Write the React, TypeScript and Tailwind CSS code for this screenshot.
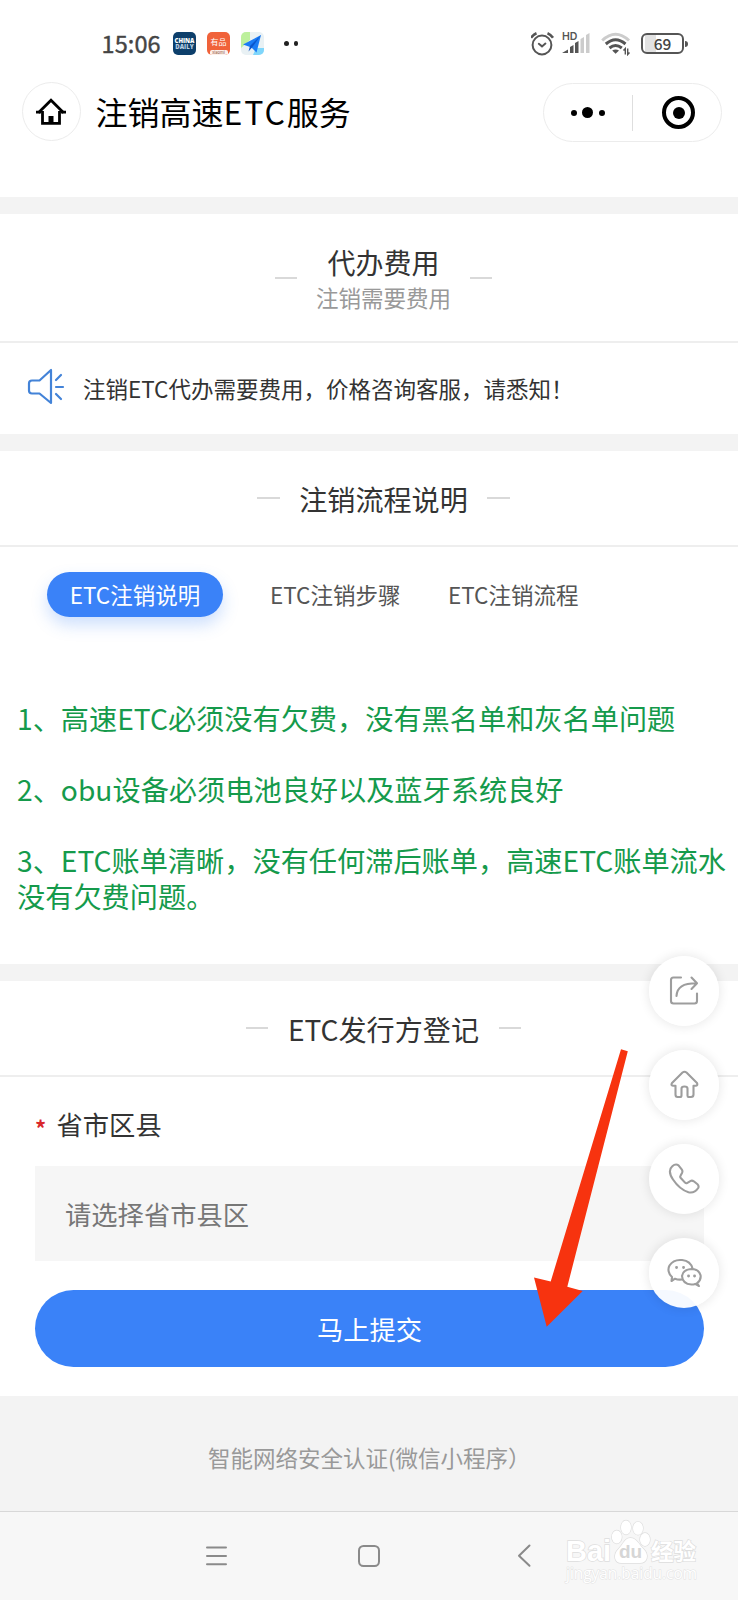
import type { ReactNode } from 'react';

const tabs = ['ETC注销说明', 'ETC注销步骤', 'ETC注销流程'];

function StatusBar() {
  return (
    <div className="flex h-[75px] items-center pl-[101.5px] pr-[50.5px] pt-[12px]">
      <span className="w-[71.5px] pt-[1px] text-[23.5px] leading-none tracking-[0.1px] text-[#444] [-webkit-text-stroke:0.4px_#444]">15:06</span>
      <div className="flex h-[23px] w-[23px] flex-col items-center justify-center rounded-[5px] bg-[#0d3f6b] font-['Open_Sans'] text-[6px] font-extrabold leading-[6px] text-white">
        <span>CHINA</span>
        <span className="text-[#b9cde0]">DAILY</span>
      </div>
      <div className="ml-[11px] flex h-[23px] w-[23px] flex-col items-center overflow-hidden rounded-[5px] bg-[#f0623a] text-white">
        <span className="h-[18px] text-[8px] leading-[19px]">有品</span>
        <span className="h-[5px] w-[18px] overflow-hidden rounded-t-[2px] bg-[#fdf1ec] text-center text-[4px] leading-[5px] text-[#8a4a35]">xiaomi</span>
      </div>
      <svg className="ml-[11px]" width="23" height="23" viewBox="0 0 23 23">
        <clipPath id="map">
          <rect width="23" height="23" rx="5" />
        </clipPath>
        <g clipPath="url(#map)">
          <rect width="23" height="23" fill="#e9f1f4" />
          <path d="M0 0h9v8L0 16z" fill="#bdf09c" />
          <path d="M12 23l3-7h8v7z" fill="#7fd6fb" />
          <path d="M2 12.500L20 3l-4.500 17.500-5-5z" fill="#1a7cf5" />
          <path d="M20 3L9 14l-1.500 5.500 3.500-4z" fill="#0a55cc" />
        </g>
      </svg>
      <div className="ml-[20px] flex gap-[5px]">
        <i className="h-[4.500px] w-[4.500px] rounded-full bg-[#222]" />
        <i className="h-[4.500px] w-[4.500px] rounded-full bg-[#222]" />
      </div>
      <svg className="ml-auto" width="24" height="24" viewBox="0 0 24 24" fill="none" stroke="#555" strokeWidth="2" strokeLinecap="round">
        <circle cx="11" cy="13" r="9.400" />
        <path d="M7.800 11.800l3.200 2.600 3.400-2.800" />
        <path d="M0 5.700Q2.500 2.400 5.500 1.200M22 5.700Q19.500 2.400 16.500 1.200" strokeLinecap="butt" strokeWidth="2.600" />
      </svg>
      <div className="relative ml-[8px] h-[23px] w-[29px]">
        <span className="absolute left-[-1px] top-0 font-['Inter'] text-[10.500px] font-semibold leading-[9px] text-[#555]">HD</span>
        <svg className="absolute left-[-1px] top-0" width="29" height="23" viewBox="0 0 29 23">
          <path d="M0 21L6 17.500V21zM8 21v-6l3.500-2v8zM13 21V11l3.500-2v12z" fill="#555" />
          <path d="M18.500 21V7l3.500-2v16zM24 21V3l3.500-2v20z" fill="#ccc" />
        </svg>
      </div>
      <svg className="ml-[9px] mr-px" width="30" height="24" viewBox="0 0 30 24" fill="none">
        <path d="M1.200 8.500Q14.500-4 28 8.500" stroke="#ccc" strokeWidth="3" />
        <path d="M4.800 12Q14.500 3.500 24.500 12" stroke="#555" strokeWidth="3" />
        <path d="M8.500 16Q14.500 11 20.800 16" stroke="#555" strokeWidth="3" />
        <path d="M11.200 18.400q3.400-1.800 6.800 0l-3.400 3.400z" fill="#555" />
        <path d="M24.300 22.500V16.500l-1.800 2M26.700 16.500v6l1.800-2" stroke="#555" strokeWidth="1.400" />
      </svg>
      <div className="ml-[9px] flex h-[21px] w-[43px] items-center justify-center rounded-[6px] border-[2.500px] border-[#555] bg-[linear-gradient(90deg,#fff_2px,#e2e2e2_2px,#e2e2e2_13px,#fff_13px)] text-[15.500px] font-medium leading-none text-[#444]">
        69
      </div>
      <i className="ml-[1px] h-[6px] w-[2.500px] rounded-r bg-[#555]" />
    </div>
  );
}

function NavBar() {
  return (
    <div className="flex h-[122px] items-start pl-[21.500px] pr-[16.500px] pt-[7px]">
      <div className="flex h-[59px] w-[59px] items-center justify-center rounded-full border border-[#ececec]">
        <svg width="32" height="30" viewBox="0 0 32 30">
          <path d="M3.400 15.700L16 3.300l12.600 12.400M7.500 14v12.400h17V14" fill="none" stroke="#000" strokeWidth="2.800" />
          <path d="M1 15.100h5M26 15.100h5" stroke="#000" strokeWidth="2.600" />
          <rect x="13.500" y="19" width="5" height="7" />
        </svg>
      </div>
      <h1 className="ml-[15px] text-[32px] leading-[58px] text-black">
        注销高速<span className="tracking-[1.900px]">ETC</span>服务
      </h1>
      <div className="ml-auto mt-[1px] flex h-[59px] w-[179px] items-center rounded-full border border-[#ececec]">
        <div className="flex w-[88px] items-center justify-center gap-[5.500px]">
          <i className="h-[6px] w-[6px] rounded-full bg-black" />
          <i className="h-[11px] w-[11px] rounded-full bg-black" />
          <i className="h-[6px] w-[6px] rounded-full bg-black" />
        </div>
        <i className="h-[36px] w-px bg-[#dedede]" />
        <div className="ml-[29.500px] flex h-[33px] w-[33px] items-center justify-center rounded-full border-[4.500px] border-black">
          <i className="h-[12px] w-[12px] rounded-full bg-black" />
        </div>
      </div>
    </div>
  );
}

function Dash() {
  return <i className="h-[2px] w-[22.500px] bg-[#d9d9d9]" />;
}

function Heading({ children }: { children: ReactNode }) {
  return (
    <div className="flex h-[96px] items-center justify-center gap-[19.500px] border-b-2 border-[#eee] pl-[29px]">
      <Dash />
      <h2 className="pt-[2px] text-[28.100px] leading-[40px] text-[#333]">{children}</h2>
      <Dash />
    </div>
  );
}

function FloatButton({ children }: { children: ReactNode }) {
  return (
    <button className="flex h-[70px] w-[70px] items-center justify-center rounded-full bg-white/95 shadow-[0_0_12px_rgba(0,0,0,0.11)]">
      <svg width="36" height="36" viewBox="0 0 36 36" fill="none" stroke="#9d9d9d" strokeWidth="2.100" strokeLinecap="round" strokeLinejoin="round">
        {children}
      </svg>
    </button>
  );
}

function Watermark() {
  return (
    <div className="absolute left-[566px] top-[1519px] flex w-[136px] flex-col text-white [-webkit-text-stroke:1.400px_#dedede] [paint-order:stroke_fill]">
      <div className="flex h-[45px] items-end">
        <span className="w-[45px] font-['Liberation_Sans'] text-[29px] font-bold leading-[26px]">Bai</span>
        <div className="relative h-[45px] w-[40px]">
          <svg width="40" height="46" viewBox="0 0 40 46" fill="#fff" stroke="#dedede" strokeWidth="1.300">
            <ellipse cx="5.800" cy="18" rx="5" ry="6.500" />
            <ellipse cx="15" cy="8.500" rx="5" ry="7" />
            <ellipse cx="27" cy="9.300" rx="5" ry="6.500" />
            <ellipse cx="34" cy="20.500" rx="5" ry="6.500" />
            <path d="M19.500 19c-6 0-7 6-12 11-6 6-4 14 3 14h18c8 0 10-8 4-14-5-5-7-11-13-11z" />
          </svg>
          <span className="absolute left-[8px] top-[20px] font-['Liberation_Sans'] text-[19px] font-bold leading-[26px] text-[#d6d6d6] [-webkit-text-stroke:0px]">du</span>
        </div>
        <span className="text-[22.500px] font-bold leading-[28px]">经验</span>
      </div>
      <span className="font-['Open_Sans'] text-[15.400px] leading-[19px] [-webkit-text-stroke:1px_#e2e2e2]">jingyan.baidu.com</span>
    </div>
  );
}

export default function App() {
  return (
    <div className="relative flex h-[1600px] w-[738px] flex-col overflow-hidden bg-white font-['Noto_Sans_CJK_SC',sans-serif]">
      <StatusBar />
      <NavBar />

      <div className="h-[17px] bg-[#f3f3f3]" />
      <div className="flex h-[129px] items-center justify-center gap-[18.500px] border-b-2 border-[#eee] pl-[29px]">
        <Dash />
        <div className="pt-[2px] text-center">
          <h2 className="text-[28px] leading-[36px] text-[#333]">代办费用</h2>
          <p className="text-[22.500px] leading-[34px] text-[#999]">注销需要费用</p>
        </div>
        <Dash />
      </div>
      <div className="flex h-[91px] items-center pl-[27px]">
        <svg className="mb-[4px]" width="38" height="38" viewBox="0 0 38 38" fill="none" stroke="#4383d8" strokeWidth="2.200" strokeLinejoin="round" strokeLinecap="round">
          <path d="M24 2v33L12.500 25.500H5Q2 25.500 2 22.500V15.500Q2 12.500 5 12.500h7.500z" />
          <path d="M29 12l5-5M29 19h7M29 26l5 5" />
        </svg>
        <p className="ml-[18px] pt-[1px] text-[22.500px] text-[#333]">注销ETC代办需要费用，价格咨询客服，请悉知！</p>
      </div>

      <div className="h-[17px] bg-[#f3f3f3]" />
      <Heading>注销流程说明</Heading>
      <div className="flex h-[143px] items-start pl-[47px] pt-[25px] text-[22.500px] leading-[45px] text-[#555]">
        {tabs.map((tab, i) => (
          <span
            key={tab}
            className={
              i === 0
                ? 'mr-[24px] w-[176px] rounded-full bg-[#3a82f8] text-center text-white shadow-[0_8px_16px_rgba(58,130,248,0.25)]'
                : 'w-[178px] pl-[23px]'
            }
          >
            {tab}
          </span>
        ))}
      </div>
      <div className="h-[274px] pl-[17px] pt-[10px] text-[28.200px] leading-[35.500px] text-[#159a4b]">
        <p className="mb-[35.500px]">1、高速ETC必须没有欠费，没有黑名单和灰名单问题</p>
        <p className="mb-[35.500px]">2、obu设备必须电池良好以及蓝牙系统良好</p>
        <p className="-mr-4">3、ETC账单清晰，没有任何滞后账单，高速ETC账单流水没有欠费问题。</p>
      </div>

      <div className="h-[17px] bg-[#f3f3f3]" />
      <Heading>ETC发行方登记</Heading>
      <div className="flex h-[89px] items-center pl-[35px] pt-[4px] text-[26.300px] text-[#333]">
        <span className="w-[21.500px] pt-[6px] text-[22px] font-bold leading-[30px] text-[#d9272b]">*</span>
        省市区县
      </div>
      <div className="ml-[35px] mr-[34px] flex h-[95px] items-center bg-[#f6f6f6] pl-[30px] text-[26.300px] text-[#777]">请选择省市县区</div>
      <button className="ml-[35px] mr-[34px] mt-[29px] h-[77px] shrink-0 rounded-full bg-[#3a82f8] text-[26.300px] text-white">马上提交</button>

      <div className="mt-[29px] h-[115px] bg-[#f3f3f3] pl-[208px] pt-[44px] text-[22.500px] leading-[34px] text-[#999]">
        智能网络安全认证(微信小程序）
      </div>
      <div className="flex h-[89px] items-center border-t border-[#d8d8d8] bg-[#f7f7f7] text-[#8a8a8a]">
        <svg className="ml-[206px]" width="22" height="22" viewBox="0 0 22 22" stroke="currentColor" strokeWidth="2" strokeLinecap="round">
          <path d="M1 2.500h19M1 11h19M1 19.300h19" />
        </svg>
        <svg className="ml-[129px]" width="24" height="24" viewBox="0 0 24 24" fill="none" stroke="currentColor" strokeWidth="2">
          <rect x="2" y="2" width="20" height="20" rx="4.500" />
        </svg>
        <svg className="ml-[136px]" width="16" height="24" viewBox="0 0 16 24" fill="none" stroke="currentColor" strokeWidth="2" strokeLinecap="round" strokeLinejoin="round">
          <path d="M12.500 1.500L2 11.800l10.500 10" />
        </svg>
      </div>

      <div className="absolute left-[649px] top-[956px] flex flex-col gap-[24px]">
        <FloatButton>
          <path d="M15 4.500H7.500Q5 4.500 5 7v21Q5 30.500 7.500 30.500h21Q31 30.500 31 28V20.500" />
          <path d="M10.500 23C11 14 17 10.300 30.500 10.300M25.500 4.500l5.500 5.800-5.500 5.700" />
        </FloatButton>
        <FloatButton>
          <path d="M16.500 5.500Q18.500 4 20.500 5.500L31 16Q32 18.500 30 18.800h-2.500V27.500Q27.500 30 25 30H22.500Q21.500 30 21.500 28.500v-7Q21.500 19.500 18.500 19.500T15.500 21.500v7Q15.500 30 14 30H11.500Q9.500 30 9.500 27.500V18.800H7Q4.500 18.500 6 16z" />
        </FloatButton>
        <FloatButton>
          <path d="M12.500 4.300Q9.500 2.300 6.300 5.300C2.300 8.800 4 14 7 18.500c4 6 9.500 10.800 15.500 12.800 4.500 1 7.500-1 9.700-4.300q1-2-.7-3.700l-3.700-3q-1.800-1.200-3.500-.2l-3.300 2q-1 .5-2-.5l-4.200-4.600q-1-1.200-.3-2.200l1.500-2.800q1-2-.3-3.700z" />
        </FloatButton>
        <FloatButton>
          <path d="M16 24.500q-4 .5-7-.8L5.500 26l.5-4C2.500 19 1.500 14 3.500 10.500 9 2 24 3.500 26.500 13.500" />
          <path d="M31 28.300Q35.500 24.500 34.500 20 32.500 14 25.500 14 17 14.500 16 21 16.500 29 25.500 29.500q2 0 3.700-.6L33 31z" />
          <path d="M10.500 12.500h.1M17.500 12.500h.1M22.500 21h.1M28.500 21h.1" strokeWidth="2.800" />
        </FloatButton>
      </div>

      <svg className="absolute left-[530px] top-[1045px]" width="102" height="286" viewBox="530 1045 102 286">
        <path d="M621 1049.300L627.800 1051.200 567.300 1286.700 582.700 1291 546.700 1326.700 534 1277.500 550.700 1281.500z" fill="#f7330f" />
      </svg>
      <Watermark />
    </div>
  );
}
